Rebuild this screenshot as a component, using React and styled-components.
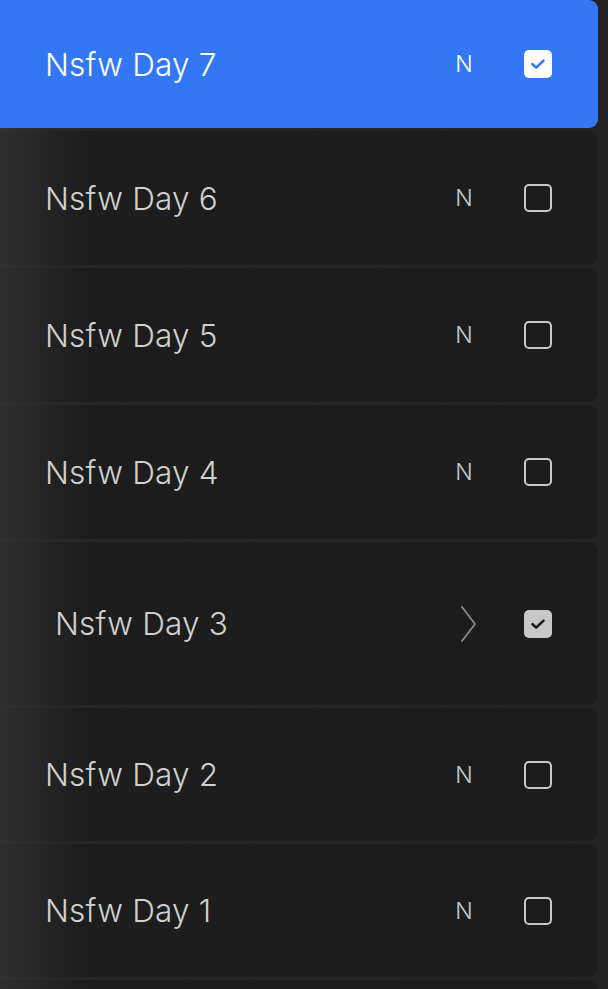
import React from "react";
import styled, { createGlobalStyle } from "styled-components";

const GlobalStyle = createGlobalStyle`
  html, body {
    margin: 0;
    padding: 0;
    background: #232323;
    font-family: Inter, "Noto Sans", sans-serif;
    overflow: hidden;
  }
`;

const Panel = styled.div`
  width: 608px;
  height: 989px;
  padding-right: 10px;
  box-sizing: border-box;
  background: linear-gradient(to right, #313131 0px, #282828 50px, #242424 100px, #232323 100%);
  overflow: hidden;
`;

const List = styled.div`
  display: flex;
  flex-direction: column;
  gap: 3px;
`;

const Row = styled.div`
  display: flex;
  align-items: center;
  height: ${(p) => p.$height}px;
  padding-left: ${(p) => (p.$group ? 55 : 45)}px;
  padding-right: 46px;
  box-sizing: border-box;
  border-radius: 0 9px 9px 0;
  background: ${(p) =>
    p.$selected
      ? "#3377f5"
      : "linear-gradient(to right, #2f2f2f 0px, #282828 30px, #212121 60px, #1d1d1d 90px, #1c1c1c 100%)"};
  color: ${(p) => (p.$selected ? "#ffffff" : "#d0d0d0")};
`;

const Name = styled.span`
  flex: 1;
  font-size: 31.5px;
  font-weight: 300;
  letter-spacing: 0.2px;
`;

const Mode = styled.span`
  width: 24px;
  margin-right: 48px;
  font-size: 23px;
  font-weight: 300;
  text-align: center;
  color: ${(p) => (p.$selected ? "#ffffff" : "#c8c8c8")};
`;

const Chevron = styled.svg`
  width: 20px;
  height: 38px;
  margin-right: 48px;
  display: block;
`;

const Check = styled.div`
  width: 28px;
  height: 28px;
  box-sizing: border-box;
  border-radius: 5px;
  display: flex;
  align-items: center;
  justify-content: center;
  border: 2px solid ${(p) => (p.$on ? "transparent" : "#c8c8c8")};
  background: ${(p) => (p.$on ? p.$fill : "transparent")};
`;

const layers = [
  { name: "Nsfw Day 7", height: 128, selected: true, checked: true },
  { name: "Nsfw Day 6", height: 134 },
  { name: "Nsfw Day 5", height: 134 },
  { name: "Nsfw Day 4", height: 134 },
  { name: "Nsfw Day 3", height: 163, group: true, checked: true },
  { name: "Nsfw Day 2", height: 133 },
  { name: "Nsfw Day 1", height: 133 },
  { name: "", height: 133, empty: true },
];

const Tick = ({ color }) => (
  <svg width="16" height="12" viewBox="0 0 16 12">
    <path
      d="M2.5 6.2 L6.2 9.6 L13.5 2.6"
      fill="none"
      stroke={color}
      strokeWidth="2.6"
      strokeLinecap="round"
      strokeLinejoin="round"
    />
  </svg>
);

export default function App() {
  return (
    <>
      <GlobalStyle />
      <Panel>
        <List>
          {layers.map((l, i) => (
            <Row key={i} $height={l.height} $selected={l.selected} $group={l.group}>
              {!l.empty && (
                <>
                  <Name>{l.name}</Name>
                  {l.group ? (
                    <Chevron viewBox="0 0 20 38">
                      <path
                        d="M6 2 L19 19 L6 36"
                        fill="none"
                        stroke="#8a8a8a"
                        strokeWidth="1.8"
                        strokeLinecap="round"
                        strokeLinejoin="round"
                      />
                    </Chevron>
                  ) : (
                    <Mode $selected={l.selected}>N</Mode>
                  )}
                  <Check
                    $on={l.checked}
                    $fill={l.selected ? "#ffffff" : "#c8c8c8"}
                  >
                    {l.checked && (
                      <Tick color={l.selected ? "#3377f5" : "#1c1c1c"} />
                    )}
                  </Check>
                </>
              )}
            </Row>
          ))}
        </List>
      </Panel>
    </>
  );
}
